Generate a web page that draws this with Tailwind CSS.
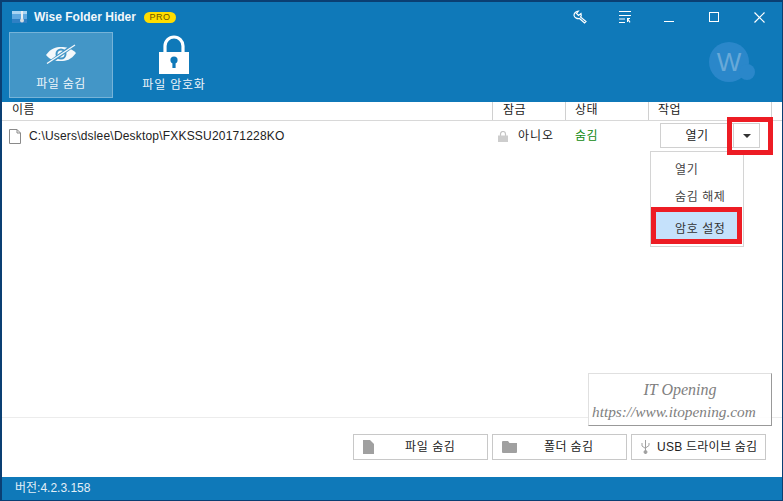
<!DOCTYPE html>
<html lang="ko">
<head>
    <meta charset="UTF-8">
    <title>Wise Folder Hider</title>
    <script src="https://cdn.jsdelivr.net/npm/@tailwindcss/browser@4"></script>
</head>
<body class="bg-[#0a3f73] overflow-hidden font-['Liberation_Sans','Noto_Sans_CJK_KR',sans-serif]">
    <div class="relative w-[783px] h-[501px] pl-[2px] pr-px pt-[2px] pb-px flex flex-col">
        <!-- Title bar -->
        <div class="h-[30px] shrink-0 bg-[#0f79b9] flex items-center text-white">
            <svg class="ml-[10px] w-[15px] h-[12px]" viewBox="0 0 15 12">
                <rect x="0" y="0" width="15" height="12" fill="#5fa9e0"/>
                <rect x="0" y="0" width="15" height="3" fill="#a8d4f2"/>
                <rect x="0" y="8" width="15" height="4" fill="#2f80c4"/>
                <rect x="9" y="0" width="2" height="9" fill="#e8eef2"/>
                <circle cx="10" cy="9.500" r="2" fill="#d5dde2"/>
            </svg>
            <span class="ml-[7px] text-[12px] font-bold text-[#f2f7fb]">Wise Folder Hider</span>
            <span class="ml-[8px] w-[32px] h-[11px] rounded-full bg-[#ffdd00] text-[#6b5600] text-[9px] leading-[11px] text-center tracking-[0.5px]">PRO</span>
            <div class="ml-auto flex items-center">
                <svg class="w-[14px] h-[14px]" viewBox="0 0 14 14" fill="none" stroke="#fff" stroke-width="1.200">
                    <path d="M5.500 1 3.500 3.500l2 2L8 3.500c.5 1.500 0 3-.5 3.500l5.500 4.500-1.500 1.500-5-4.500c-2 .5-5-.5-5.500-3C.8 3.500 3 1 5.500 1z"/>
                </svg>
                <svg class="ml-[32px] w-[12px] h-[12px]" viewBox="0 0 12 12" fill="none" stroke="#fff">
                    <path d="M0 .5h12M0 4.500h12M0 8h6M0 11.500h6"/>
                    <path d="M8 7h3v1H9.500l2 3-1 .8-1.500-2.300V11H8z" fill="#fff" stroke="none"/>
                </svg>
                <div class="ml-[33px] w-[10px] h-[10px] border-b border-white"></div>
                <div class="ml-[35px] w-[10px] h-[10px] border border-white"></div>
                <svg class="ml-[35px] mr-[17px] w-[11px] h-[11px]" viewBox="0 0 11 11" stroke="#fff" stroke-width="1.200">
                    <path d="M.5.5l10 10M10.500.5l-10 10"/>
                </svg>
            </div>
        </div>

        <!-- Tabs -->
        <div class="h-[70px] shrink-0 bg-[#0f79b9] flex items-start pl-[7px] text-white">
            <div class="w-[104px] h-[66px] bg-[#4396c7] border border-[#76b3d8] flex flex-col items-center">
                <svg class="mt-[11px] w-[32px] h-[20px]" viewBox="0 0 32 20">
                    <path d="M1 11C6 4 11 3 16 3s10 1 15 6C26 16 21 17 16 17S6 17 1 11Z" fill="#f4f8fb"/>
                    <circle cx="16" cy="10" r="4.500" fill="none" stroke="#4396c7" stroke-width="2"/>
                    <path d="M3 20 30 0" stroke="#4396c7" stroke-width="3.500"/>
                    <path d="M2 19.500 30 1" stroke="#f4f8fb" stroke-width="1.300"/>
                </svg>
                <span class="mt-[12px] text-[12px] leading-[16px] tracking-[0.4px] text-[#eef5fa]">파일 숨김</span>
            </div>
            <div class="w-[122px] flex flex-col items-center">
                <svg class="mt-[3px] w-[30px] h-[40px]" viewBox="0 0 30 40">
                    <path d="M6 19V11a9 9 0 0 1 18 0v8" fill="none" stroke="#fff" stroke-width="3.200"/>
                    <rect x="0" y="17" width="30" height="22" fill="#fff"/>
                    <circle cx="15" cy="25" r="3.600" fill="#0f79b9"/>
                    <rect x="13.400" y="26" width="3.200" height="7" fill="#0f79b9"/>
                </svg>
                <span class="mt-[2px] text-[12px] leading-[16px] tracking-[0.8px] text-[#eef5fa]">파일 암호화</span>
            </div>
            <div class="ml-auto mr-[33px] mt-[10px] relative w-[40px] h-[40px] rounded-full bg-[#2a87ca] flex items-center justify-center text-[26px] text-[#68a9d8]">
                W
                <div class="absolute right-[-6px] bottom-[2px] w-[16px] h-[16px] rounded-full bg-[#2a87ca]"></div>
            </div>
        </div>

        <!-- File list -->
        <div class="flex-1 bg-white flex flex-col min-h-0">
            <div class="h-[19px] shrink-0 flex border-b border-[#d8d8d8] text-[12px] leading-[17px] tracking-[0.5px] text-[#222]">
                <div class="w-[490px] pl-[10px]">이름</div>
                <div class="w-[73px] pl-[10px] border-l border-[#d0d0d0]">잠금</div>
                <div class="w-[83px] pl-[9px] border-l border-[#d0d0d0]">상태</div>
                <div class="w-[124px] pl-[9px] border-l border-r border-[#d0d0d0]">작업</div>
            </div>
            <div class="h-[30px] shrink-0 flex items-center text-[12px] text-[#222]">
                <svg class="ml-[7px] w-[12px] h-[15px]" viewBox="0 0 12 15" fill="#fff" stroke="#8a8a8a">
                    <path d="M.5.5h7.500l3.500 3.500v10.500h-11z"/>
                    <path d="M8 .5V4h3.500" fill="none"/>
                </svg>
                <span class="ml-[8px] w-[469px] tracking-[0.19px]">C:\Users\dslee\Desktop\FXKSSU20171228KO</span>
                <svg class="w-[10px] h-[11px]" viewBox="0 0 10 11">
                    <path d="M2.500 5V3a2.500 2.500 0 0 1 5 0v2" fill="none" stroke="#c4c4c4" stroke-width="1.200"/>
                    <rect y="4.500" width="10" height="6.500" fill="#cdcdcd"/>
                </svg>
                <span class="ml-[10px] w-[57px] tracking-[1px]">아니오</span>
                <span class="w-[85px] tracking-[0.5px] text-[#108a10]">숨김</span>
                <div class="self-start mt-[2px] w-[74px] h-[25px] border border-[#d0d0d0] flex items-center justify-center tracking-[0.5px]">열기</div>
                <div class="self-start mt-[2px] w-[26px] h-[25px] border border-l-0 border-[#d0d0d0] flex items-center justify-center">
                    <div class="w-0 h-0 border-x-[4px] border-x-transparent border-t-[4px] border-t-[#333]"></div>
                </div>
            </div>
            <div class="flex-1"></div>
            <div class="h-[60px] shrink-0 border-t border-[#ececec] flex justify-end gap-[4px] pt-[16px] pr-[16px] text-[12px] text-[#222]">
                <div class="w-[135px] h-[26px] border border-[#c8c8c8] flex items-center pl-[9px]">
                    <svg class="w-[11px] h-[14px]" viewBox="0 0 11 14" fill="#a0a0a0"><path d="M0 0h7l4 4v10H0z"/></svg>
                    <span class="ml-[31px] tracking-[0.6px]">파일 숨김</span>
                </div>
                <div class="w-[135px] h-[26px] border border-[#c8c8c8] flex items-center pl-[9px]">
                    <svg class="w-[15px] h-[12px]" viewBox="0 0 15 12" fill="#a0a0a0"><path d="M1 0h5l1.500 2H15v9a1 1 0 0 1-1 1H1a1 1 0 0 1-1-1V1a1 1 0 0 1 1-1z"/></svg>
                    <span class="ml-[27px] tracking-[0.4px]">폴더 숨김</span>
                </div>
                <div class="w-[135px] h-[26px] border border-[#c8c8c8] flex items-center pl-[9px]">
                    <svg class="w-[9px] h-[14px]" viewBox="0 0 9 14" fill="none" stroke="#a0a0a0"><path d="M4.500 0v14M1 3v3l3.500 2.500M8 3v2.500L4.500 8"/><circle cx="4.500" cy="12" r="1.500" fill="#a0a0a0"/></svg>
                    <span class="ml-[7px] whitespace-nowrap tracking-[0.25px]">USB 드라이브 숨김</span>
                </div>
            </div>
        </div>

        <!-- Status bar -->
        <div class="h-[23px] shrink-0 bg-[#0f79b9] pl-[13px] text-[12px] leading-[22px] text-[#e3eff7]">버전:4.2.3.158</div>

        <!-- Dropdown menu -->
        <div class="absolute left-[650px] top-[151px] w-[94px] h-[96px] bg-white border border-[#d4d4d4] text-[12px] tracking-[0.6px] text-[#444]">
            <div class="h-[30px] pl-[24px] leading-[36px]">열기</div>
            <div class="h-[25px] pl-[24px] leading-[31px]">숨김 해제</div>
            <div class="mx-[1px] mt-[3px] h-[30px] pl-[23px] leading-[34px] bg-[#c5e1fb] text-[#333] border-t-2 border-white">암호 설정</div>
        </div>

        <!-- Red highlights -->
        <div class="absolute left-[727px] top-[117px] w-[46px] h-[38px] border-[5px] border-[#ed1c24]"></div>
        <div class="absolute left-[651px] top-[207px] w-[91px] h-[37px] border-[5px] border-[#ed1c24]"></div>

        <!-- Watermark -->
        <div class="absolute left-[588px] top-[373px] w-[184px] h-[53px] bg-white/90 border border-[#e0e0e0] border-r-[#999] border-b-[#999] font-['Liberation_Serif',serif] italic text-[#808080] leading-[22px] pt-[5px]">
            <div class="text-center text-[16px]">IT Opening</div>
            <div class="pl-[3px] text-[15.300px] whitespace-nowrap">https://www.itopening.com</div>
        </div>
    </div>
</body>
</html>
